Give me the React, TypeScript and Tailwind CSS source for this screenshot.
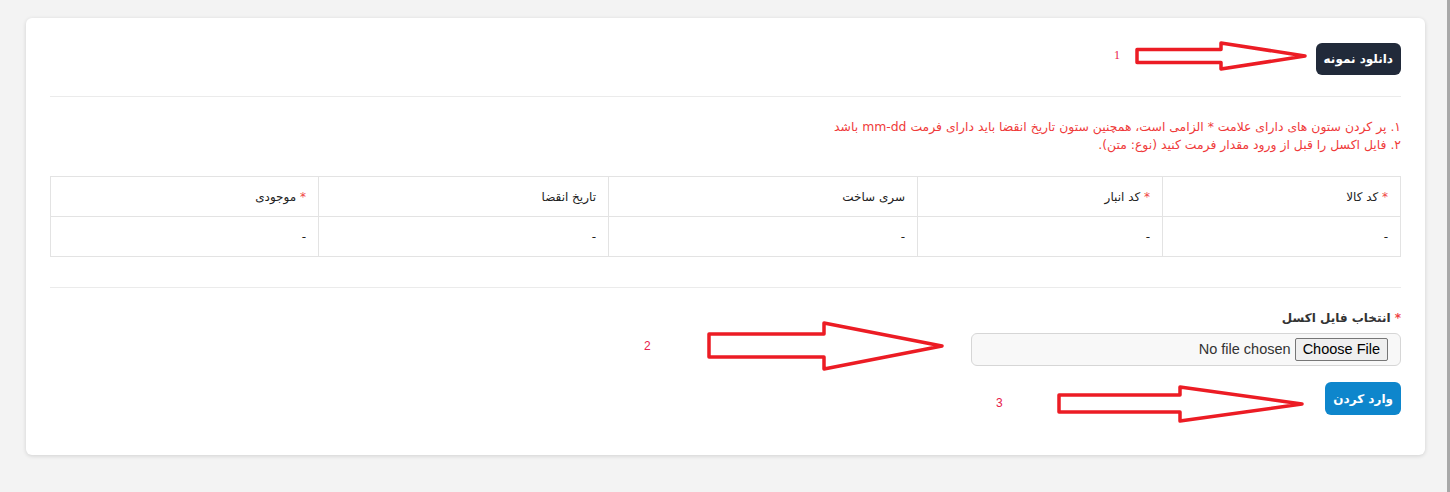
import React from "react";

const COLUMNS = [
  { title: "کد کالا", required: true, width: 238 },
  { title: "کد انبار", required: true, width: 245 },
  { title: "سری ساخت", required: false, width: 309 },
  { title: "تاریخ انقضا", required: false, width: 290 },
  { title: "موجودی", required: true, width: 268 },
];

/* red hand-drawn annotation arrows laid over the screenshot */
function Annotations() {
  const stroke = "#ec1c24";
  return (
    <svg
      className="pointer-events-none absolute inset-0"
      width={1450}
      height={492}
      viewBox="0 0 1450 492"
      aria-hidden
    >
      <g fill="none" stroke={stroke} strokeWidth={3.5} strokeLinejoin="round">
        <polygon points="1137,49.5 1221,49.5 1221,43 1305,56 1221,69 1221,62.5 1137,62.5" />
        <polygon points="709,334 824,334 824,323 942,346 824,369 824,357 709,357" />
        <polygon points="1059,395 1180,395 1180,387 1302,404 1180,421 1180,412 1059,412" />
      </g>
      <g fill="#e8204a" fontSize={12} style={{ fontFamily: '"Liberation Sans", Arial, sans-serif' }}>
        <text x={1114} y={59} style={{ fontFamily: '"Liberation Serif", serif' }}>1</text>
        <text x={644} y={350}>2</text>
        <text x={996} y={407}>3</text>
      </g>
    </svg>
  );
}

function Req() {
  return <span className="text-[#ef4444]">* </span>;
}

export default function App() {
  return (
    <div className="relative flex h-[492px] w-[1450px] bg-[#f3f3f3]">
      <div className="flex-1 pl-[26px] pr-[22px] pt-[18px]">
        <div
          dir="rtl"
          className="rounded-md bg-white px-6 pt-6 pb-10 shadow-[0_1px_4px_rgba(0,0,0,0.14)]"
          style={{ fontFamily: '"DejaVu Sans", Tahoma, sans-serif' }}
        >
          <div className="flex pt-px">
            <button className="h-8 rounded-md bg-[#212a3a] px-2 text-[12px] font-bold text-white">
              دانلود نمونه
            </button>
          </div>

          <hr className="mt-[21px] border-[#ebebeb]" />

          <div className="mt-[21px] text-[12.4px] leading-[18px] text-[#ef3b3b]">
            <p>۱. پر کردن ستون های دارای علامت * الزامی است، همچنین ستون تاریخ انقضا باید دارای فرمت mm-dd باشد</p>
            <p>۲. فایل اکسل را قبل از ورود مقدار فرمت کنید (نوع: متن).</p>
          </div>

          <table className="mt-[22px] w-full table-fixed border-collapse text-[12px] text-[#222]">
            <colgroup>
              {COLUMNS.map((c) => (
                <col key={c.title} style={{ width: c.width }} />
              ))}
            </colgroup>
            <thead>
              <tr>
                {COLUMNS.map((c) => (
                  <th key={c.title} className="h-10 border border-[#e3e3e3] px-3 text-right font-normal">
                    {c.required && <Req />}
                    {c.title}
                  </th>
                ))}
              </tr>
            </thead>
            <tbody>
              <tr>
                {COLUMNS.map((c) => (
                  <td key={c.title} className="h-10 border border-[#e3e3e3] px-3 text-right">
                    -
                  </td>
                ))}
              </tr>
            </tbody>
          </table>

          <hr className="mt-[30px] border-[#ebebeb]" />

          <label className="mt-[21px] block text-[12px] font-bold text-[#333]">
            <span className="text-[#ef4444]">* </span>
            انتخاب فایل اکسل
          </label>
          <div className="mt-[6px] flex h-[33px] w-[430px] items-center rounded-md border border-[#d6d6d6] bg-[#f8f8f8] px-3">
            <input
              type="file"
              className="text-[14.5px] text-[#333] file:me-1 file:rounded-[2px] file:border file:border-[#767676] file:bg-[#efefef] file:px-[7px] file:py-0 file:text-[#000]"
              style={{ fontFamily: '"Liberation Sans", Arial, sans-serif' }}
            />
          </div>

          <div className="mt-4 flex">
            <button className="h-[33px] rounded-md bg-[#0e86cc] px-2 text-[12px] font-bold text-white">
              وارد کردن
            </button>
          </div>
        </div>
      </div>
      <div className="w-[5px] bg-[#a8a8a8]" />
      <Annotations />
    </div>
  );
}
